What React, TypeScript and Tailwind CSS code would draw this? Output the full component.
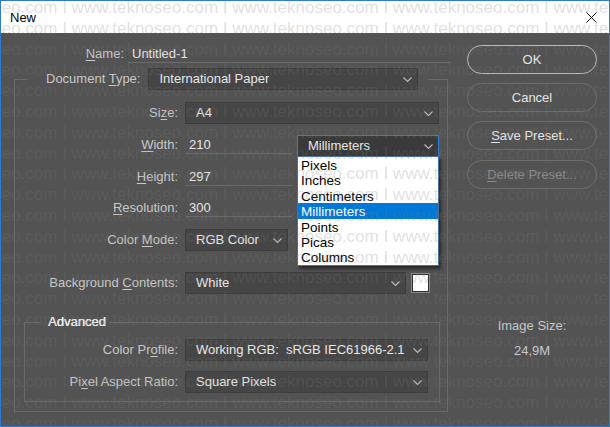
import type { ReactNode } from "react";

function Chevron({ className = "" }: { className?: string }) {
  return (
    <svg width="9" height="5" viewBox="0 0 9 5" className={className}>
      <polyline
        points="0.5,0.5 4.5,4.5 8.5,0.5"
        fill="none"
        stroke="currentColor"
        strokeWidth="1.1"
      />
    </svg>
  );
}

function Select({
  value,
  className = "",
  active = false,
}: {
  value?: string;
  className?: string;
  active?: boolean;
}) {
  return (
    <div
      className={`flex h-[22px] shrink-0 items-center justify-between border pl-[10px] pr-[5px] ${
        active ? "border-[#2f7fd6] bg-[#3a3a3a]" : "border-[#3d3d3d] bg-[#464646]"
      } ${className}`}
    >
      <span className="truncate whitespace-pre text-[#e6e6e6]">{value}</span>
      <Chevron className="text-[#bdbdbd]" />
    </div>
  );
}

function TextInput({ value }: { value: string }) {
  return (
    <div className="h-[20px] w-[107px] shrink-0 self-start border-b border-[#6b6b6b] pl-[4px] leading-[21px] text-[#e6e6e6]">
      {value}
    </div>
  );
}

function Row({
  label,
  labelW,
  className = "",
  children,
}: {
  label: ReactNode;
  labelW: string;
  className?: string;
  children: ReactNode;
}) {
  return (
    <div className={`flex h-[22px] items-center ${className}`}>
      <div className={`${labelW} shrink-0 text-right text-[#c8c8c8]`}>{label}</div>
      <div className="ml-[7px] flex h-full items-center">{children}</div>
    </div>
  );
}

const U = ({ children }: { children: ReactNode }) => (
  <span className="underline decoration-1 underline-offset-2">{children}</span>
);

const units = ["Pixels", "Inches", "Centimeters", "Millimeters", "Points", "Picas", "Columns"];

function Button({
  children,
  primary = false,
  disabled = false,
  className = "",
}: {
  children: ReactNode;
  primary?: boolean;
  disabled?: boolean;
  className?: string;
}) {
  return (
    <div
      className={`flex h-[29px] items-center justify-center rounded-full ${
        primary ? "border-[1.5px] border-[#bdbdbd]" : "border border-[#6e6e6e]"
      } ${disabled ? "text-[#8a8a8a]" : "text-[#e6e6e6]"} ${className}`}
    >
      {children}
    </div>
  );
}

const watermark = Array.from({ length: 21 }, (_, i) => i);

export default function App() {
  return (
    <div className="relative flex h-[427px] w-[610px] flex-col overflow-hidden border border-[#2d7bd2] font-['Liberation_Sans',Arial,sans-serif] text-[13px]">
      {/* title bar */}
      <div className="flex h-[32px] shrink-0 items-center justify-between bg-white pl-[9px] pr-[12px] pt-[1px] text-black">
        <span className="text-[13px]">New</span>
        <svg width="11" height="11" viewBox="0 0 11 11">
          <path d="M0.5 0.5 L10.5 10.5 M10.5 0.5 L0.5 10.5" stroke="#111" strokeWidth="1" />
        </svg>
      </div>

      {/* body */}
      <div className="flex flex-1 bg-[#535353] pl-[13px]">
        <div className="flex w-[436px] flex-col">
          {/* name */}
          <div className="mt-[10px] flex h-[20px]">
            <div className="w-[110px] text-right leading-[21px] text-[#c8c8c8]">
              <U>N</U>ame:
            </div>
            <div className="ml-[4px] w-[322px] border-b border-[#6b6b6b] pl-[4px] leading-[21px] text-[#e6e6e6]">
              Untitled-1
            </div>
          </div>

          <fieldset className="mt-[5px] w-[434px] border border-[#6a6a6a] pb-[9px]">
            <legend className="ml-[12px] flex items-center pl-[19px] pr-[10px]">
              <span className="text-[#c8c8c8]">
                Document <U>T</U>ype:
              </span>
              <Select value="International Paper" className="ml-[8px] w-[270px]" />
            </legend>

            <Row label={<>Si<U>z</U>e:</>} labelW="w-[163px]" className="mt-[12px]">
              <Select value="A4" className="w-[254px]" />
            </Row>

            <Row label={<><U>W</U>idth:</>} labelW="w-[163px]" className="mt-[10px]">
              <TextInput value="210" />
              <div className="relative ml-[5px] self-start pt-[1px]">
                <Select value="Millimeters" active className="h-[21px] w-[142px]" />
                <div className="absolute left-0 top-[22px] z-20 w-[142px] border border-[#4a6f9a] bg-white shadow-[2px_3px_3px_rgba(0,0,0,0.5)]">
                  {units.map((u) => (
                    <div
                      key={u}
                      className={`h-[15.4px] pl-[3px] text-[13.5px] leading-[17px] ${
                        u === "Millimeters" ? "bg-[#0078d7] text-white" : "text-black"
                      }`}
                    >
                      {u}
                    </div>
                  ))}
                </div>
              </div>
            </Row>

            <Row label={<><U>H</U>eight:</>} labelW="w-[163px]" className="mt-[10px]">
              <TextInput value="297" />
              <Select value="Millimeters" className="ml-[5px] w-[142px]" />
            </Row>

            <Row label={<><U>R</U>esolution:</>} labelW="w-[163px]" className="mt-[9px]">
              <TextInput value="300" />
              <Select value="Pixels/Inch" className="ml-[5px] w-[142px]" />
            </Row>

            <Row label={<>Color <U>M</U>ode:</>} labelW="w-[163px]" className="mt-[10px]">
              <Select value="RGB Color" className="w-[103px]" />
              <Select value="8 bit" className="ml-[9px] w-[142px]" />
            </Row>

            <Row label={<>Background <U>C</U>ontents:</>} labelW="w-[163px]" className="mt-[21px]">
              <Select value="White" className="w-[221px]" />
              <div className="ml-[6px] h-[18px] w-[17px] border border-[#2e2e2e] bg-white outline outline-1 outline-[#8a8a8a]" />
            </Row>

            <fieldset className="ml-[9px] mt-[20px] w-[416px] border border-[#6a6a6a] pb-[8px]">
              <legend className="ml-[15px] pl-[8px] pr-[3px] leading-[16px] text-[#ececec] [text-shadow:0.3px_0_0_#ececec]">
                Advanced
              </legend>
              <Row label={<>Color Pr<U>o</U>file:</>} labelW="w-[153px]" className="mt-[9px]">
                <Select value="Working RGB:  sRGB IEC61966-2.1" className="w-[243px]" />
              </Row>
              <Row label={<>Pi<U>x</U>el Aspect Ratio:</>} labelW="w-[153px]" className="mt-[10px]">
                <Select value="Square Pixels" className="w-[243px]" />
              </Row>
            </fieldset>
          </fieldset>
        </div>

        {/* right column */}
        <div className="ml-[17px] flex w-[130px] flex-col pt-[12px]">
          <Button primary>OK</Button>
          <Button className="mt-[9px]">Cancel</Button>
          <Button className="mt-[9px]">
            <span>
              <U>S</U>ave Preset...
            </span>
          </Button>
          <Button disabled className="mt-[10px]">
            <span>
              <U>D</U>elete Preset...
            </span>
          </Button>
          <div className="mt-[129px] text-center leading-[16px] text-[#c8c8c8]">Image Size:</div>
          <div className="mt-[9px] text-center leading-[16px] text-[#c8c8c8]">24,9M</div>
        </div>
      </div>

      {/* watermark */}
      <div className="pointer-events-none absolute inset-0 z-50 overflow-hidden">
        <div className="-ml-[90px] -mt-[3px] flex flex-col">
          {watermark.map((i) => (
            <div
              key={i}
              className="h-[20.8px] whitespace-pre font-['Liberation_Sans',Arial,sans-serif] text-[17px] leading-[20.8px] text-[rgba(120,120,120,0.24)]"
            >
              {"www.teknoseo.com I www.teknoseo.com I www.teknoseo.com I www.teknoseo.com I www.teknoseo.com I "}
            </div>
          ))}
        </div>
      </div>
    </div>
  );
}
